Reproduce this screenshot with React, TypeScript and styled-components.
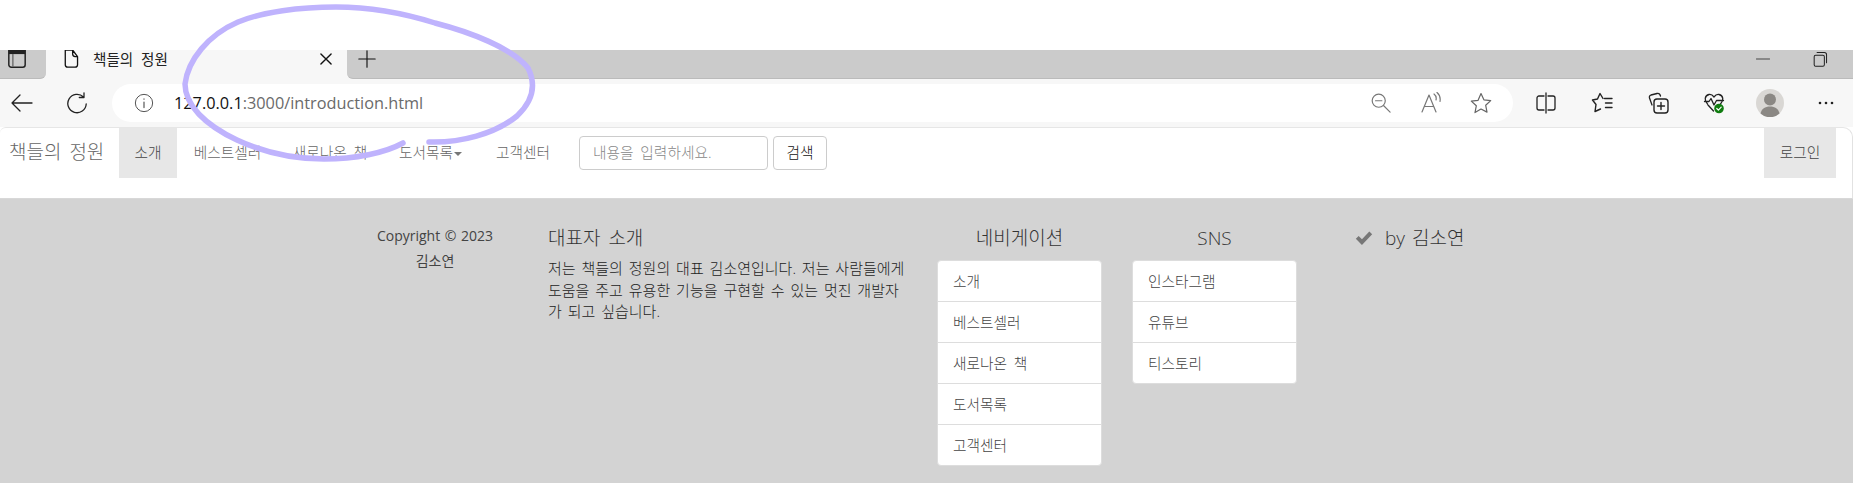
import { ReactNode } from "react";
import styled, { createGlobalStyle } from "styled-components";

const Global = createGlobalStyle`
  * { box-sizing: border-box; }
  html, body { margin: 0; background: #fff; }
  body {
    font-family: "Open Sans", "Noto Sans CJK KR", sans-serif;
    font-size: 14.7px;
    font-weight: 300;
    word-spacing: 3px;
    color: #333;
    overflow: hidden;
  }
`;

const Screen = styled.div`
  position: relative;
  width: 1853px;
  height: 483px;
  overflow: hidden;
  padding-top: 50px;
  display: flex;
  flex-direction: column;
`;

const TabStrip = styled.div`
  height: 29px;
  flex: none;
  background: #f7f7f7;
  display: flex;
  overflow: hidden;
`;

const TabToggle = styled.div`
  width: 46px;
  flex: none;
  background: #cbcbcb;
  border-bottom: 1px solid #bbb;
  border-bottom-right-radius: 6px;
  padding-left: 8px;
`;

const Tab = styled.div`
  width: 301px;
  flex: none;
  height: 18px;
  display: flex;
  align-items: center;
  padding: 0 14px 0 16px;
  font-size: 14.6px;
  font-weight: 400;
  word-spacing: 4px;
  color: #222;
`;

const TabTitle = styled.span`
  margin-left: 13px;
  flex: 1;
  margin-top: -2px;
`;

const TabRest = styled.div`
  flex: 1;
  background: #cbcbcb;
  border-bottom: 1px solid #bbb;
  border-bottom-left-radius: 6px;
  display: flex;
  justify-content: space-between;
  height: 29px;
`;

const NewTab = styled.div`
  width: 40px;
  height: 18px;
  display: flex;
  justify-content: center;
  align-items: center;
`;

const WindowButtons = styled.div`
  display: flex;
  height: 18px;
  align-items: center;
  padding-right: 25px;
  gap: 41px;
`;

const Toolbar = styled.div`
  height: 48px;
  flex: none;
  background: #f7f7f7;
  display: flex;
  align-items: flex-start;
  padding-top: 5px;
`;

const ToolButton = styled.div<{ $w: number }>`
  width: ${(p) => p.$w}px;
  height: 38px;
  flex: none;
  display: flex;
  align-items: center;
  justify-content: center;
`;

const Address = styled.div`
  width: 1401px;
  height: 38px;
  margin: 0 5px 0 2px;
  flex: none;
  background: #fff;
  border-radius: 19px;
  display: flex;
  align-items: center;
  padding: 0 7px 0 22px;
`;

const Url = styled.div`
  margin-left: 20px;
  flex: 1;
  font-size: 16.3px;
  font-weight: 400;
  word-spacing: 0;
  color: #6a6a6a;
  span { color: #111; }
`;

const Page = styled.div`
  height: 72px;
  flex: none;
  background: #fff;
  border-top: 1px solid #e6e6e6;
  border-right: 1px solid #e2e2e2;
  border-bottom: 1px solid #d8d8d8;
  border-radius: 6px 10px 0 0;
  display: flex;
  align-items: flex-start;
  padding-left: 9px;
`;

const Brand = styled.div`
  width: 110px;
  height: 50px;
  flex: none;
  font-size: 19px;
  word-spacing: 3px;
  line-height: 48px;
  color: #666;
`;

const NavItem = styled.div<{ $active?: boolean; $w: number }>`
  width: ${(p) => p.$w}px;
  height: 50px;
  flex: none;
  text-align: center;
  line-height: 49px;
  color: ${(p) => (p.$active ? "#444" : "#666")};
  background: ${(p) => (p.$active ? "#e7e7e7" : "transparent")};
`;

const Caret = styled.i`
  display: inline-block;
  border-top: 4px solid #777;
  border-left: 4px solid transparent;
  border-right: 4px solid transparent;
  margin-left: 1px;
  vertical-align: middle;
`;

const SearchForm = styled.div`
  display: flex;
  gap: 5px;
  padding: 8px 0 0 12px;
`;

const SearchInput = styled.div`
  width: 189px;
  height: 34px;
  border: 1px solid #ccc;
  border-radius: 4px;
  line-height: 31px;
  padding-left: 13px;
  color: #888;
`;

const SearchButton = styled.div`
  width: 54px;
  height: 34px;
  border: 1px solid #ccc;
  border-radius: 4px;
  line-height: 31px;
  text-align: center;
  color: #111;
`;

const Login = styled(NavItem)`
  margin-left: auto;
  margin-right: 16px;
  background: #e7e7e7;
  color: #444;
`;

const Footer = styled.div`
  flex: 1;
  background: #d3d3d3;
  display: flex;
  align-items: flex-start;
  padding: 27px 0 0 348px;
`;

const CopyColumn = styled.div`
  width: 200px;
  flex: none;
  margin-top: -3px;
  padding-right: 26px;
  text-align: center;
  line-height: 25px;
  font-size: 14px;
  font-weight: 400;
  word-spacing: 1px;
  color: #444;
`;

const AboutColumn = styled.div`
  width: 389px;
  flex: none;
  padding-right: 29px;
`;

const Heading = styled.div`
  font-size: 19px;
  word-spacing: 3px;
  line-height: 24px;
  color: #333;
  margin-bottom: 8px;
`;

const About = styled.div`
  line-height: 21.5px;
  font-size: 15px;
  word-spacing: 2px;
  color: #222;
`;

const ListColumn = styled.div`
  width: 165px;
  flex: none;
  margin-right: 30px;
  text-align: center;
`;

const List = styled.div`
  background: #fff;
  border: 1px solid #ddd;
  border-radius: 4px;
  text-align: left;
  margin-top: 10px;
`;

const ListItem = styled.div`
  height: 41px;
  line-height: 40px;
  padding-left: 15px;
  color: #444;
  border-top: 1px solid #ddd;
  &:first-child { border-top: 0; height: 40px; }
`;

const Credit = styled.div`
  display: flex;
  align-items: center;
  gap: 12px;
  margin-left: 28px;
  font-size: 19px;
  word-spacing: 2px;
  line-height: 24px;
  color: #333;
`;

const Pen = styled.svg`
  position: absolute;
  left: 0;
  top: 0;
  pointer-events: none;
`;

const Stroke = ({ d, c = "#222", w = 1.3 }: { d: string; c?: string; w?: number }) => (
  <path d={d} stroke={c} strokeWidth={w} fill="none" strokeLinecap="round" strokeLinejoin="round" />
);

const Icon = ({ size = 22, children }: { size?: number; children: ReactNode }) => (
  <svg width={size} height={size} viewBox="0 0 22 22">
    {children}
  </svg>
);

export default function App() {
  return (
    <Screen>
      <Global />
      <TabStrip>
        <TabToggle>
          <Icon size={18}>
            <rect x="1" y="-4" width="20" height="25" rx="3" fill="none" stroke="#222" strokeWidth="1.8" />
            <path d="M1 0h20v5H1z" fill="#222" />
            <path d="M6 5v15" stroke="#444" strokeWidth="1.2" />
          </Icon>
        </TabToggle>
        <Tab>
          <Icon size={18}>
            <Stroke d="M4 -3v21a3 3 0 0 0 3 3h9a3 3 0 0 0 3-3V8l-6-8H4zM13 0v5a3 3 0 0 0 3 3h3" c="#111" w={1.6} />
          </Icon>
          <TabTitle>책들의 정원</TabTitle>
          <Icon size={14}>
            <Stroke d="M3 3l16 16M19 3L3 19" c="#111" w={2.2} />
          </Icon>
        </Tab>
        <TabRest>
          <NewTab>
            <Icon size={18}>
              <Stroke d="M11 1v20M1 11h20" c="#111" w={1.4} />
            </Icon>
          </NewTab>
          <WindowButtons>
            <Icon size={16}>
              <Stroke d="M2 11h18" c="#333" w={1.2} />
            </Icon>
            <Icon size={16}>
              <Stroke d="M3 8a2 2 0 0 1 2-2h10a2 2 0 0 1 2 2v11a2 2 0 0 1-2 2H5a2 2 0 0 1-2-2z" c="#222" w={1.4} />
              <Stroke d="M7 2h10a3 3 0 0 1 3 3v11" c="#222" w={1.4} />
            </Icon>
          </WindowButtons>
        </TabRest>
      </TabStrip>
      <Toolbar>
        <ToolButton $w={44}>
          <Icon size={22}>
            <Stroke d="M21 11H1M9 3l-8 8 8 8" c="#222" w={1.3} />
          </Icon>
        </ToolButton>
        <ToolButton $w={66}>
          <Icon size={22}>
            <Stroke d="M17.5 5A9.2 9.2 0 1 0 20.2 12M18 .8v4.7h-4.7" c="#222" w={1.3} />
          </Icon>
        </ToolButton>
        <Address>
          <Icon size={20}>
            <circle cx="11" cy="11" r="9.5" fill="none" stroke="#555" strokeWidth="1.1" />
            <Stroke d="M11 10v6M11 6.5v.3" c="#555" w={1.3} />
          </Icon>
          <Url>
            <span>127.0.0.1</span>:3000/introduction.html
          </Url>
          <ToolButton $w={50}>
            <Icon size={20}>
              <circle cx="8.5" cy="8.5" r="7.2" fill="none" stroke="#777" strokeWidth="1.3" />
              <Stroke d="M5 8.5h7M14 14l7 7" c="#777" w={1.3} />
            </Icon>
          </ToolButton>
          <ToolButton $w={50}>
            <Icon size={22}>
              <Stroke d="M2 20L9 3l7 17M4.5 14.5h9M14 2c2 1.5 2.6 3.5 2 6M17 .5c3 2.5 3.6 5.5 3 9" c="#777" w={1.2} />
            </Icon>
          </ToolButton>
          <ToolButton $w={50}>
            <Icon size={22}>
              <Stroke d="M11 1.5l2.9 6.3 6.8.8-5 4.7 1.3 6.8L11 17l-6 3.6 1.3-6.8-5-4.7 6.8-.8z" c="#666" w={1.2} />
            </Icon>
          </ToolButton>
        </Address>
        <ToolButton $w={56}>
          <Icon size={22}>
            <Stroke d="M9 4H4a2 2 0 0 0-2 2v10a2 2 0 0 0 2 2h5M13 4h5a2 2 0 0 1 2 2v10a2 2 0 0 1-2 2h-5M11 1v20" c="#222" w={1.3} />
          </Icon>
        </ToolButton>
        <ToolButton $w={56}>
          <Icon size={22}>
            <Stroke d="M12 6.5L9 1.5 6.5 7 1.5 8 5 12.500 4 19.500 9.500 17M13.500 6.500H21M14.500 11H21M14.500 15.500H21" c="#222" w={1.4} />
          </Icon>
        </ToolButton>
        <ToolButton $w={56}>
          <Icon size={22}>
            <Stroke d="M5 13L2.500 6a2.500 2.500 0 0 1 1.500-3l6-1.500c2-.4 3 .5 3.500 2.500" c="#222" w={1.3} />
            <rect x="7" y="7" width="14" height="14" rx="3" fill="none" stroke="#222" strokeWidth="1.4" />
            <Stroke d="M14 10.500v7M10.500 14h7" c="#222" w={1.4} />
          </Icon>
        </ToolButton>
        <ToolButton $w={56}>
          <Icon size={22}>
            <Stroke d="M4.500 12C1 8.500 1.500 3.500 6 2.500c2.200-.4 3.700.7 5 2.500 1.300-1.800 2.800-2.900 5-2.500 4.500 1 5 6 1.500 9.500M1.500 9.500h4.500l2-3 3 6.500 2.500-4.500h7M5 13l5.500 6" c="#222" w={1.3} />
            <circle cx="16" cy="16.500" r="4.800" fill="#107c10" />
            <Stroke d="M13.800 16.500l1.600 1.600 2.800-3" c="#fff" w={1.2} />
          </Icon>
        </ToolButton>
        <ToolButton $w={56}>
          <svg width="28" height="28" viewBox="0 0 28 28">
            <circle cx="14" cy="14" r="14" fill="#d9d7d4" />
            <circle cx="14" cy="10.500" r="6" fill="#8b8884" />
            <path d="M4.500 24.500C5.500 20 9 17.500 14 17.500s8.500 2.500 9.500 7a14 14 0 0 1-19 0z" fill="#8b8884" />
          </svg>
        </ToolButton>
        <ToolButton $w={56}>
          <svg width="18" height="4" viewBox="0 0 18 4">
            <circle cx="3" cy="2" r="1.300" fill="#222" />
            <circle cx="9" cy="2" r="1.300" fill="#222" />
            <circle cx="15" cy="2" r="1.300" fill="#222" />
          </svg>
        </ToolButton>
      </Toolbar>
      <Page>
        <Brand>책들의 정원</Brand>
        <NavItem $active $w={58}>소개</NavItem>
        <NavItem $w={101}>베스트셀러</NavItem>
        <NavItem $w={104}>새로나온 책</NavItem>
        <NavItem $w={97}>
          도서목록<Caret />
        </NavItem>
        <NavItem $w={88}>고객센터</NavItem>
        <SearchForm>
          <SearchInput>내용을 입력하세요.</SearchInput>
          <SearchButton>검색</SearchButton>
        </SearchForm>
        <Login $w={72}>로그인</Login>
      </Page>
      <Footer>
        <CopyColumn>
          Copyright © 2023
          <br />
          김소연
        </CopyColumn>
        <AboutColumn>
          <Heading>대표자 소개</Heading>
          <About>저는 책들의 정원의 대표 김소연입니다. 저는 사람들에게 도움을 주고 유용한 기능을 구현할 수 있는 멋진 개발자가 되고 싶습니다.</About>
        </AboutColumn>
        <ListColumn>
          <Heading>네비게이션</Heading>
          <List>
            <ListItem>소개</ListItem>
            <ListItem>베스트셀러</ListItem>
            <ListItem>새로나온 책</ListItem>
            <ListItem>도서목록</ListItem>
            <ListItem>고객센터</ListItem>
          </List>
        </ListColumn>
        <ListColumn>
          <Heading>SNS</Heading>
          <List>
            <ListItem>인스타그램</ListItem>
            <ListItem>유튜브</ListItem>
            <ListItem>티스토리</ListItem>
          </List>
        </ListColumn>
        <Credit>
          <Icon size={18}>
            <path d="M1 12l3.500-3.500 4 4L17.500 3 21 6.500 8.500 19.500z" fill="#777" />
          </Icon>
          by 김소연
        </Credit>
      </Footer>
      <Pen width="1853" height="483" viewBox="0 0 1853 483">
        <path
          d="M429 142C460 143 495 134 517 116C534 100 536 84 528 68C512 48 470 32 435 23C400 12 365 7 336 7C300 7 262 12 238 22C208 35 188 60 185 84C185 105 205 125 237 140C265 153 295 159 324 159C355 159 385 153 403 143"
          fill="none"
          stroke="#bfb3fd"
          strokeWidth="5.500"
          strokeLinecap="round"
        />
      </Pen>
    </Screen>
  );
}
